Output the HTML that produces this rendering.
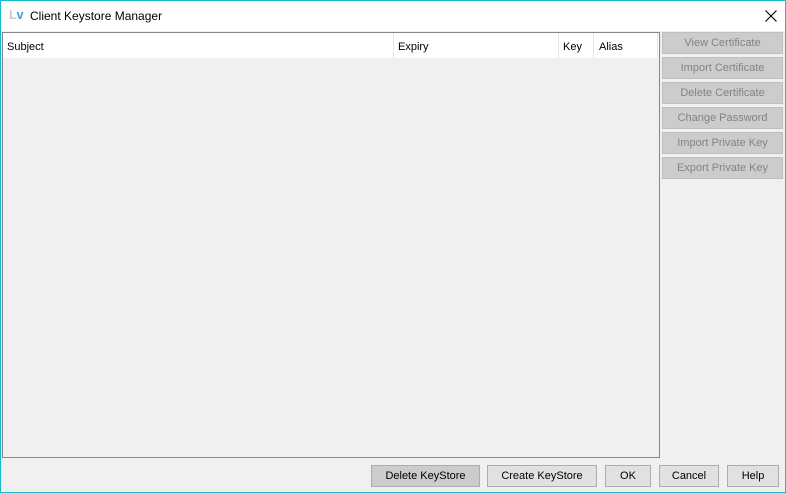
<!DOCTYPE html>
<html><head><meta charset="utf-8"><style>
*{margin:0;padding:0;box-sizing:border-box}
body{width:786px;height:493px;overflow:hidden;background:#f0f0f0;font-family:"Liberation Sans",sans-serif;font-size:11px;color:#000;position:relative}
.win{position:absolute;left:0;top:0;width:786px;height:493px;border:1px solid #17b8c8;}
.title{position:absolute;left:1px;top:1px;width:784px;height:30px;background:#fff}
.logo{position:absolute;left:8px;top:7px;font-size:12.5px;font-weight:bold}
.ttext{position:absolute;left:29px;top:8px;font-size:12px}
.close{position:absolute;left:763px;top:8px}
.panel{position:absolute;left:2px;top:32px;width:658px;height:426px;border:1px solid #828790;background:#f0f0f0}
.hdr{position:absolute;left:0;top:0;width:656px;height:25px;background:#fff}
.hc{position:absolute;top:8px}
.sep{position:absolute;top:0;width:1px;height:25px;background:#e5e5e5}
.rb{position:absolute;left:662px;width:121px;height:22px;background:#cccccc;border:1px solid #bfbfbf;color:#838383;text-align:center;line-height:21px}
.bb{position:absolute;top:465px;height:22px;background:#e1e1e1;border:1px solid #adadad;text-align:center;line-height:21px}
</style></head><body><div class="win"></div>
<div class="title">
<div class="logo"><span style="color:#c8c8c8">L</span><span style="color:#3aa0d8">v</span></div>
<div class="ttext">Client Keystore Manager</div>
<svg class="close" width="14" height="14" viewBox="0 0 14 14"><path d="M1.5 1.5L12.5 12.5M12.5 1.5L1.5 12.5" stroke="#000" stroke-width="1.1"/></svg>
</div>
<div class="panel"><div class="hdr">
<span class="hc" style="left:4px">Subject</span>
<div class="sep" style="left:390px"></div>
<span class="hc" style="left:395px">Expiry</span>
<div class="sep" style="left:555px"></div>
<span class="hc" style="left:560px">Key</span>
<div class="sep" style="left:590px"></div>
<span class="hc" style="left:596px">Alias</span>
<div class="sep" style="left:654px"></div>
</div></div>
<div class="rb" style="top:32px">View Certificate</div>
<div class="rb" style="top:57px">Import Certificate</div>
<div class="rb" style="top:82px">Delete Certificate</div>
<div class="rb" style="top:107px">Change Password</div>
<div class="rb" style="top:132px">Import Private Key</div>
<div class="rb" style="top:157px">Export Private Key</div>
<div class="bb" style="left:371px;width:109px;background:#cccccc">Delete KeyStore</div>
<div class="bb" style="left:487px;width:110px">Create KeyStore</div>
<div class="bb" style="left:605px;width:46px">OK</div>
<div class="bb" style="left:659px;width:60px">Cancel</div>
<div class="bb" style="left:727px;width:52px">Help</div>
</body></html>
